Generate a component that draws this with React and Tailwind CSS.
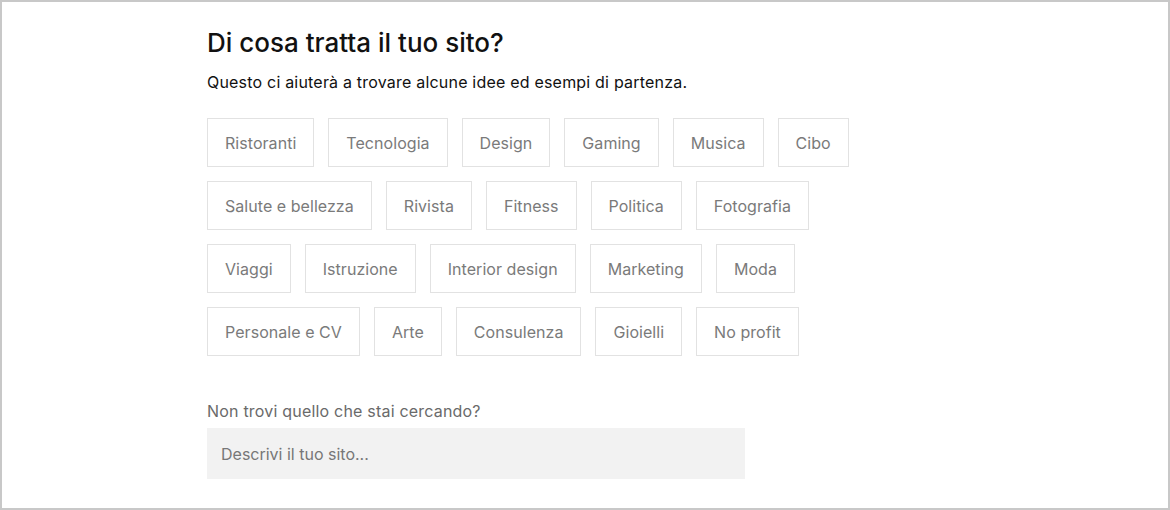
import { useState } from "react";

const categories = [
  ["Ristoranti", "Tecnologia", "Design", "Gaming", "Musica", "Cibo"],
  ["Salute e bellezza", "Rivista", "Fitness", "Politica", "Fotografia"],
  ["Viaggi", "Istruzione", "Interior design", "Marketing", "Moda"],
  ["Personale e CV", "Arte", "Consulenza", "Gioielli", "No profit"],
];

export default function App() {
  const [selected, setSelected] = useState(null);
  const [text, setText] = useState("");

  return (
    <div
      className="w-[1170px] h-[510px] border-2 border-[#c8c8c8] bg-white overflow-hidden"
      style={{ fontFamily: "Inter, 'Noto Sans', sans-serif" }}
    >
      <div className="pl-[205px] pt-[24px]">
        <h1 className="text-[26px] leading-[34px] font-medium text-[#111] tracking-[0px]">
          Di cosa tratta il tuo sito?
        </h1>
        <p className="mt-[12px] text-[16px] leading-[20px] text-[#111] tracking-[0.2px]">
          Questo ci aiuterà a trovare alcune idee ed esempi di partenza.
        </p>

        <div className="mt-[26px] flex flex-col gap-[14px]">
          {categories.map((row, i) => (
            <div key={i} className="flex gap-[14px]">
              {row.map((cat) => (
                <button
                  key={cat}
                  onClick={() => setSelected(cat)}
                  className={`h-[49px] px-[17px] border text-[16px] tracking-[0.05px] ${
                    selected === cat
                      ? "border-[#111] text-[#111]"
                      : "border-[#e2e2e2] text-[#7a7a7a]"
                  }`}
                >
                  {cat}
                </button>
              ))}
            </div>
          ))}
        </div>

        <p className="mt-[45px] text-[16px] leading-[20px] text-[#6a6a6a] tracking-[0.2px]">
          Non trovi quello che stai cercando?
        </p>
        <input
          value={text}
          onChange={(e) => setText(e.target.value)}
          placeholder="Descrivi il tuo sito..."
          className="mt-[7px] w-[538px] h-[51px] bg-[#f2f2f2] px-[14px] text-[16px] text-[#333] placeholder:text-[#777] outline-none"
        />
      </div>
    </div>
  );
}
